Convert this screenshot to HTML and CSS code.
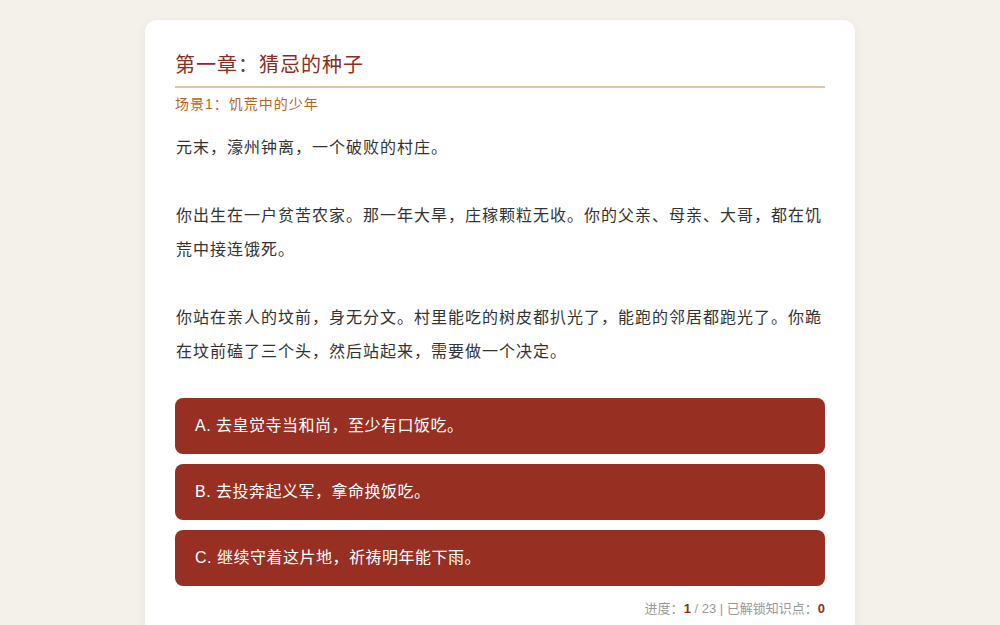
FILE: index.html
```html
<!DOCTYPE html>
<html lang="zh-CN">
<head>
<meta charset="utf-8">
<link rel="stylesheet" href="styles.css">
</head>
<body>
<main class="card">
  <h1 class="chapter">第一章：猜忌的种子</h1>
  <h2 class="scene">场景1：饥荒中的少年</h2>
  <div class="story">
    <p>元末，濠州钟离，一个破败的村庄。</p>
    <p>你出生在一户贫苦农家。那一年大旱，庄稼颗粒无收。你的父亲、母亲、大哥，都在饥荒中接连饿死。</p>
    <p>你站在亲人的坟前，身无分文。村里能吃的树皮都扒光了，能跑的邻居都跑光了。你跪在坟前磕了三个头，然后站起来，需要做一个决定。</p>
  </div>
  <div class="choices">
    <button class="choice">A. 去皇觉寺当和尚，至少有口饭吃。</button>
    <button class="choice">B. 去投奔起义军，拿命换饭吃。</button>
    <button class="choice">C. 继续守着这片地，祈祷明年能下雨。</button>
  </div>
  <div class="status">进度：<b>1</b> / 23 | 已解锁知识点：<b>0</b></div>
</main>
</body>
</html>
```

FILE: styles.css
```css
html, body {
  margin: 0;
  padding: 0;
}
body {
  background: #f4f1ea;
  font-family: "Liberation Sans", "Noto Sans CJK SC", sans-serif;
  color: #333;
  height: 625px;
  overflow: hidden;
}
.card {
  width: 650px;
  margin: 20px auto 0;
  background: #fff;
  border-radius: 12px;
  padding: 30px 30px 40px;
  box-shadow: 0 2px 12px rgba(0, 0, 0, 0.06);
}
.chapter {
  margin: 0;
  font-size: 20px;
  font-weight: normal;
  line-height: 30px;
  color: #8b2e1f;
  padding-bottom: 6px;
  border-bottom: 2px solid #d8c8a4;
  letter-spacing: 1px;
}
.scene {
  margin: 6px 0 0;
  font-size: 14px;
  font-weight: normal;
  line-height: 20px;
  color: #b5651d;
  letter-spacing: 1px;
}
.story {
  margin-top: 17px;
  font-size: 16px;
  line-height: 34px;
  letter-spacing: 1px;
  padding-left: 1px;
}
.story p {
  margin: 0 0 34px;
}
.story p:last-child {
  margin-bottom: 0;
}
.choices {
  margin-top: 29px;
  display: flex;
  flex-direction: column;
  gap: 10px;
}
.choice {
  display: block;
  width: 100%;
  border: none;
  border-radius: 8px;
  background: #982f23;
  color: #fff;
  font-family: inherit;
  font-size: 16px;
  line-height: 26px;
  letter-spacing: 0.5px;
  padding: 15px 20px;
  text-align: left;
}
.status {
  margin-top: 13px;
  text-align: right;
  font-size: 13px;
  line-height: 20px;
  color: #999;
}
.status b {
  color: #8b2e1f;
}
```
